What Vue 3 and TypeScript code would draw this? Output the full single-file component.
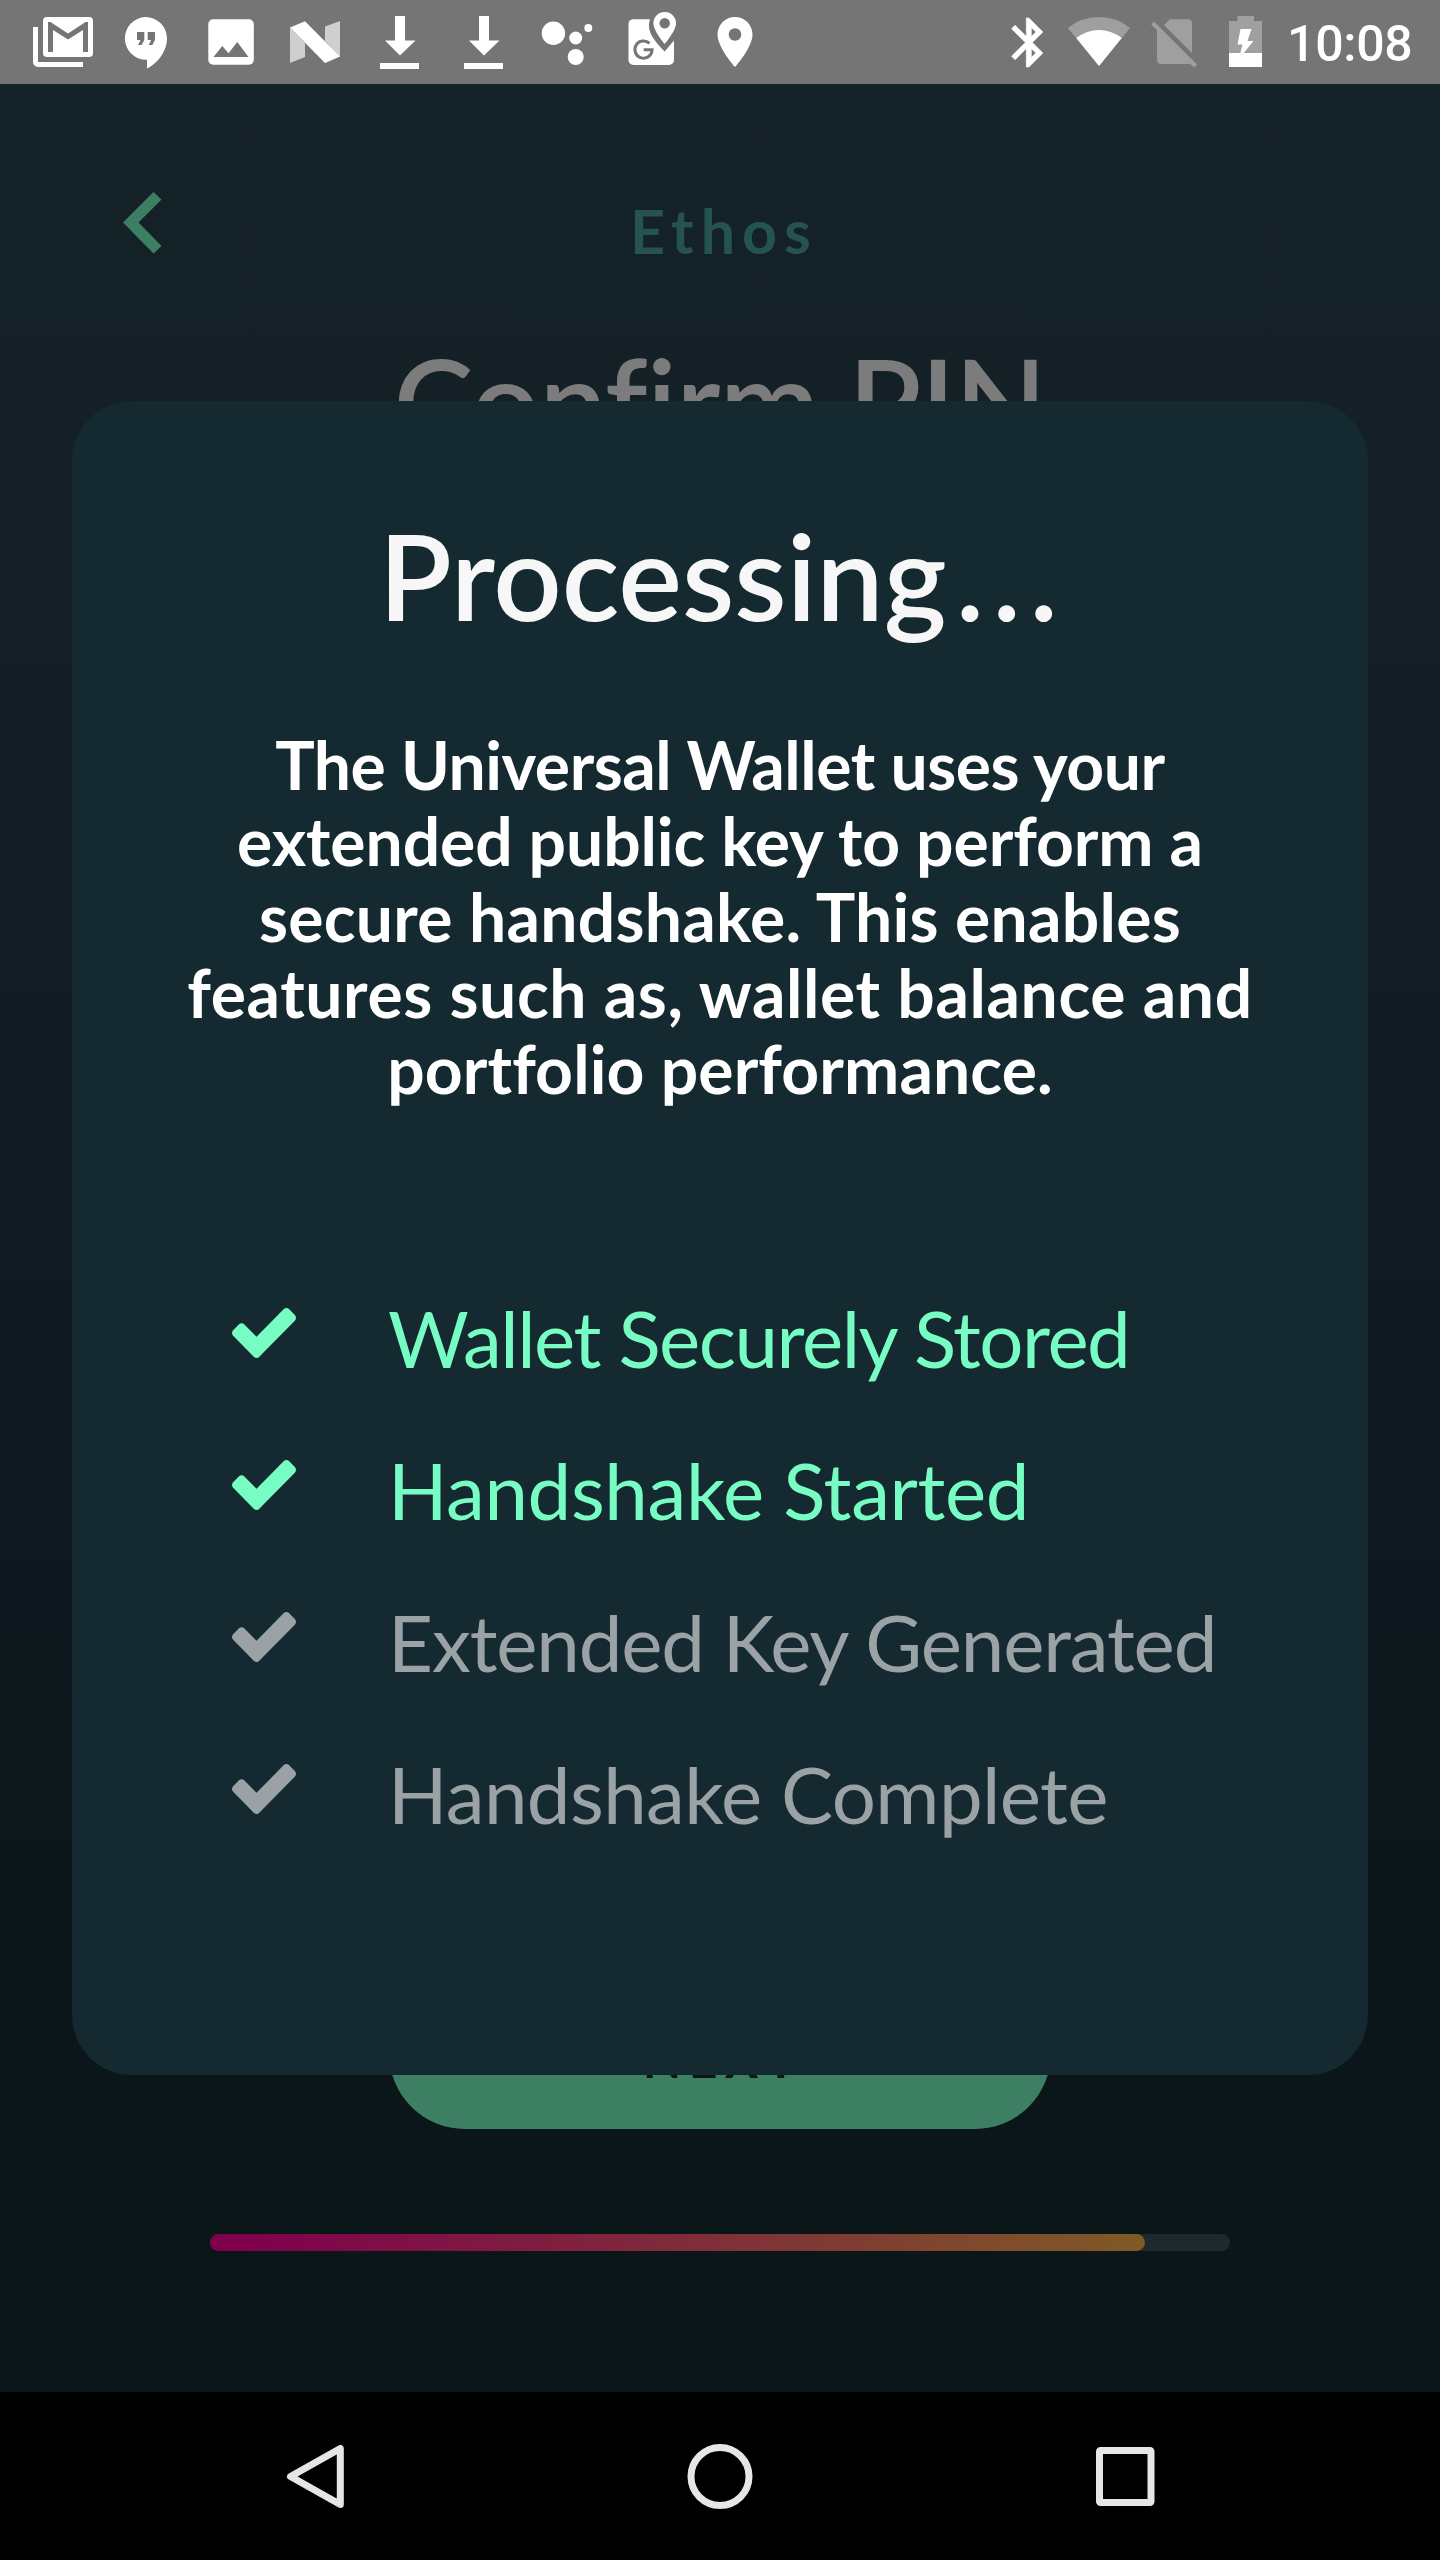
<script setup lang="ts">
interface Line {
  text: string
  tracking: number
}

interface Step extends Line {
  done: boolean
}

const message: Line[] = [
  { text: 'The Universal Wallet uses your', tracking: -0.45 },
  { text: 'extended public key to perform a', tracking: -0.07 },
  { text: 'secure handshake. This enables', tracking: 0.27 },
  { text: 'features such as, wallet balance and', tracking: 0.6 },
  { text: 'portfolio performance.', tracking: 0.11 },
]

const steps: Step[] = [
  { text: 'Wallet Securely Stored', done: true, tracking: -1.47 },
  { text: 'Handshake Started', done: true, tracking: -0.36 },
  { text: 'Extended Key Generated', done: false, tracking: -1.13 },
  { text: 'Handshake Complete', done: false, tracking: -0.6 },
]

const progress = 91.7
</script>

<template>
  <div class="phone">
    <header class="status">
      <div class="group">
        <!-- mail -->
        <svg width="109" height="84" viewBox="0 0 109 84">
          <path d="M35.500 27V62a2.500 2.500 0 0 0 2.500 2.500H83" fill="none" stroke="#fff" stroke-width="5" />
          <rect x="43" y="17" width="50" height="40" rx="4" fill="#fff" />
          <path d="M48 52V22h2.500L68 33.500 85.500 22H88V52H83V30L68 39.500 53 30V52Z" fill="#757575" />
        </svg>
        <!-- chat -->
        <svg width="83" height="84" viewBox="109 0 83 84">
          <path d="M145.500 17a21.400 21.400 0 1 0 1.500 42.800V68.500C158 63 167 51 167 38.500A21.500 21.500 0 0 0 145.500 17Z" fill="#fff" />
          <path d="M137 32h7.300v8l-2.700 5h-3.600l2.500-5H137ZM147.700 32h7.300v8l-2.700 5h-3.600l2.500-5h-3.500Z" fill="#757575" />
        </svg>
        <!-- picture -->
        <svg width="84" height="84" viewBox="192 0 84 84">
          <rect x="208.300" y="19.300" width="45.500" height="45.500" rx="5" fill="#fff" />
          <path d="M213.500 57 222.300 46 228.500 53.300 237.300 42 248.500 57Z" fill="#757575" />
        </svg>
        <!-- android N -->
        <svg width="84" height="84" viewBox="276 0 84 84">
          <path d="M290 27.500 305 43V57L290 63ZM325 26.500 340 21V57L325 41Z" fill="#cfcfcf" />
          <path d="M290 27.500 305 21.300 340 56.500 325 63Z" fill="#fff" />
        </svg>
        <!-- downloads -->
        <svg v-for="n in 2" :key="n" width="84" height="84" viewBox="360 0 84 84">
          <path d="M395 16h10v24.500h10.500L400 55.500 385 40.500h10ZM380 63h39v6H380Z" fill="#fff" />
        </svg>
        <!-- assistant -->
        <svg width="84" height="84" viewBox="528 0 84 84" fill="#fff">
          <circle cx="553.400" cy="33.300" r="11.700" />
          <circle cx="575.700" cy="38" r="6.500" />
          <circle cx="588.300" cy="28" r="4" />
          <circle cx="575.700" cy="57" r="8" />
        </svg>
        <!-- maps -->
        <svg width="84" height="84" viewBox="612 0 84 84">
          <path d="M633 19.300H650C647 28 650 37 664.700 51.500L674 40.500V60a5 5 0 0 1-5 5H633.500a5 5 0 0 1-5-5V24.300a5 5 0 0 1 4.500-5Z" fill="#fff" />
          <path d="M664.700 12a11.300 11.300 0 0 0-11.300 11.300C653.400 31 664.700 44 664.700 44S676 31 676 23.300A11.300 11.300 0 0 0 664.700 12Z" fill="#fff" />
          <circle cx="664.700" cy="23.300" r="5.200" fill="#757575" />
          <path d="M649.500 43.400a8.600 8.600 0 1 0 2.600 6.300H643.700" fill="none" stroke="#757575" stroke-width="3" />
        </svg>
        <!-- place -->
        <svg width="84" height="84" viewBox="696 0 84 84">
          <path transform="translate(705 12) scale(2.500)" d="M12 2C8.130 2 5 5.130 5 9c0 5.250 7 13 7 13s7-7.750 7-13c0-3.870-3.130-7-7-7zm0 9.500c-1.380 0-2.500-1.120-2.500-2.500s1.120-2.500 2.500-2.500 2.500 1.120 2.500 2.500-1.120 2.500-2.500 2.500z" fill="#fff" />
        </svg>
      </div>
      <div class="group">
        <!-- bluetooth -->
        <svg width="70" height="84" viewBox="985 0 70 84">
          <path transform="translate(999.400 13.100) scale(2.450)" d="M17.710 7.710L12 2h-1v7.590L6.410 5 5 6.410 10.590 12 5 17.590 6.410 19 11 14.410V22h1l5.710-5.710-4.300-4.290 4.300-4.290zM13 5.830l1.880 1.880L13 9.590V5.830zm1.880 10.460L13 18.170v-3.760l1.880 1.880z" fill="#fff" stroke="#fff" stroke-width="0.300" />
        </svg>
        <!-- wifi -->
        <svg width="90" height="84" viewBox="1055 0 90 84">
          <path d="M1099 66 1067.800 28Q1081 17 1099 17T1130 28Z" fill="#9f9f9f" />
          <path d="M1099 66 1076.300 38Q1087 30 1099 30T1121.700 38Z" fill="#fff" />
        </svg>
        <!-- no sim -->
        <svg width="65" height="84" viewBox="1145 0 65 84" fill="#9f9f9f">
          <path d="M1164 25 1170 19.300H1188a4 4 0 0 1 4 4V53ZM1157 29 1191.500 63.500 1189 64H1161a4 4 0 0 1-4-4Z" />
          <path d="M1151.200 24.500 1154 21.500 1197 64.500 1194 67.500Z" />
        </svg>
        <!-- battery -->
        <svg width="65" height="84" viewBox="1210 0 65 84">
          <path d="M1237.500 16h16.500v5h8V67h-33V21h8.500Z" fill="#a0a0a0" />
          <path d="M1229 53h33V67h-33ZM1240.500 29h11l-4 12h6L1243 54h-3l2.500-9.500h-5Z" fill="#fff" />
        </svg>
        <span class="clock">10:08</span>
      </div>
    </header>

    <main class="screen">
      <div class="topbar">
        <svg class="back" width="39" height="62" viewBox="0 0 39 62">
          <path d="M30.500 0 38.500 7.500 15.500 30.500 38.500 54 30.500 61.500 0 30.500Z" fill="#3d7f62" />
        </svg>
        <span class="brand">Ethos</span>
      </div>
      <h1 class="heading">Confirm PIN</h1>
      <button class="next">NEXT</button>
      <div class="track"><div class="fill" :style="{ width: progress + '%' }"></div></div>
    </main>

    <section class="modal">
      <h2 class="title">Processing<span class="dots">...</span></h2>
      <p class="message">
        <span v-for="line in message" :key="line.text" :style="{ letterSpacing: line.tracking + 'px' }">{{ line.text }}</span>
      </p>
      <ul class="steps">
        <li v-for="step in steps" :key="step.text" :class="{ done: step.done }">
          <svg width="64" height="50" viewBox="121 334 1550 1188" preserveAspectRatio="none">
            <path fill="currentColor" d="M1671 566q0 40-28 68l-724 724-136 136q-28 28-68 28t-68-28l-136-136-362-362q-28-28-28-68t28-68l136-136q28-28 68-28t68 28l294 295 656-657q28-28 68-28t68 28l136 136q28 28 28 68z" />
          </svg>
          <span :style="{ letterSpacing: step.tracking + 'px' }">{{ step.text }}</span>
        </li>
      </ul>
    </section>

    <nav class="navbar">
      <svg width="60" height="70" viewBox="285 2441 60 70">
        <path d="M340.300 2448.500V2504.500L290.500 2476.500Z" />
      </svg>
      <svg width="68" height="70" viewBox="686.500 2441 68 70">
        <circle cx="720.500" cy="2476.500" r="29" />
      </svg>
      <svg width="62" height="70" viewBox="1094 2441 62 70">
        <rect x="1099.500" y="2450.500" width="51.500" height="52" rx="1" />
      </svg>
    </nav>
  </div>
</template>

<style>
body {
  margin: 0;
  background: #000;
}
</style>

<style scoped>
.phone {
  position: relative;
  display: flex;
  flex-direction: column;
  width: 1440px;
  height: 2560px;
  overflow: hidden;
  font-family: Lato, "Liberation Sans", sans-serif;
}
svg {
  display: block;
  flex: none;
}
.status {
  display: flex;
  justify-content: space-between;
  height: 84px;
  background: #757575;
}
.group {
  display: flex;
}
.clock {
  width: 153px;
  padding-left: 11.7px;
  font: 500 50px/88px Roboto, sans-serif;
  letter-spacing: -0.28px;
  color: #fff;
}
.screen {
  display: flex;
  flex-direction: column;
  align-items: center;
  box-sizing: border-box;
  height: 2308px;
  padding: 107px 0 141px;
  background: linear-gradient(#152228, #111d23 38%, #0b161b 84%, #0a1617);
}
.topbar {
  display: grid;
  grid-template-columns: 1fr auto 1fr;
  width: 100%;
  height: 80px;
}
.back {
  margin: 1px 0 0 122.500px;
}
.brand {
  padding-left: 8px;
  font-size: 61px;
  font-weight: 700;
  line-height: 80px;
  letter-spacing: 7px;
  color: #255350;
}
.heading {
  margin: 57px 0 0;
  font-size: 120px;
  font-weight: 600;
  line-height: 144px;
  letter-spacing: -0.6px;
  color: #7c7c7c;
}
.next {
  width: 662px;
  height: 152px;
  margin: auto 0 105px;
  padding: 12px 0 0 6px;
  border: 0;
  border-radius: 76px;
  background: #3d7f62;
  font: 700 50px/140px Lato, sans-serif;
  letter-spacing: 7.4px;
  color: #0a1617;
}
.track {
  width: 1020px;
  height: 17px;
  border-radius: 8.5px;
  background: #1e292d;
}
.fill {
  height: 100%;
  border-radius: 8.5px;
  background: linear-gradient(90deg, #7f004d 3%, #7f5a26);
}
.modal {
  position: absolute;
  top: 401px;
  left: 72px;
  box-sizing: border-box;
  width: 1296px;
  height: 1674px;
  padding-top: 102px;
  border-radius: 60px;
  background: #142a30;
}
.title {
  margin: 0;
  padding-left: 5px;
  font-size: 120px;
  font-weight: 600;
  line-height: 144px;
  text-align: center;
  color: #f7f7f7;
}
.dots {
  margin-left: 9px;
  letter-spacing: 8.5px;
}
.message {
  display: flex;
  flex-direction: column;
  align-items: center;
  margin: 80px 0 0;
  font-size: 66px;
  font-weight: 700;
  line-height: 76px;
  white-space: nowrap;
  color: #fff;
}
.steps {
  margin: 154px 0 0;
  padding: 0 0 0 160px;
  list-style: none;
}
.steps li {
  display: flex;
  gap: 92px;
  height: 152px;
  font-size: 78px;
  line-height: 154px;
  white-space: nowrap;
  color: #9aa2a5;
}
.steps li.done {
  color: #77fdc3;
}
.steps svg {
  margin-top: 47px;
}
.navbar {
  display: flex;
  justify-content: space-between;
  height: 70px;
  padding: 49px 284px 49px 285px;
  background: #000;
  fill: none;
  stroke: #e6e6e6;
  stroke-width: 7;
  stroke-linejoin: round;
}
</style>
